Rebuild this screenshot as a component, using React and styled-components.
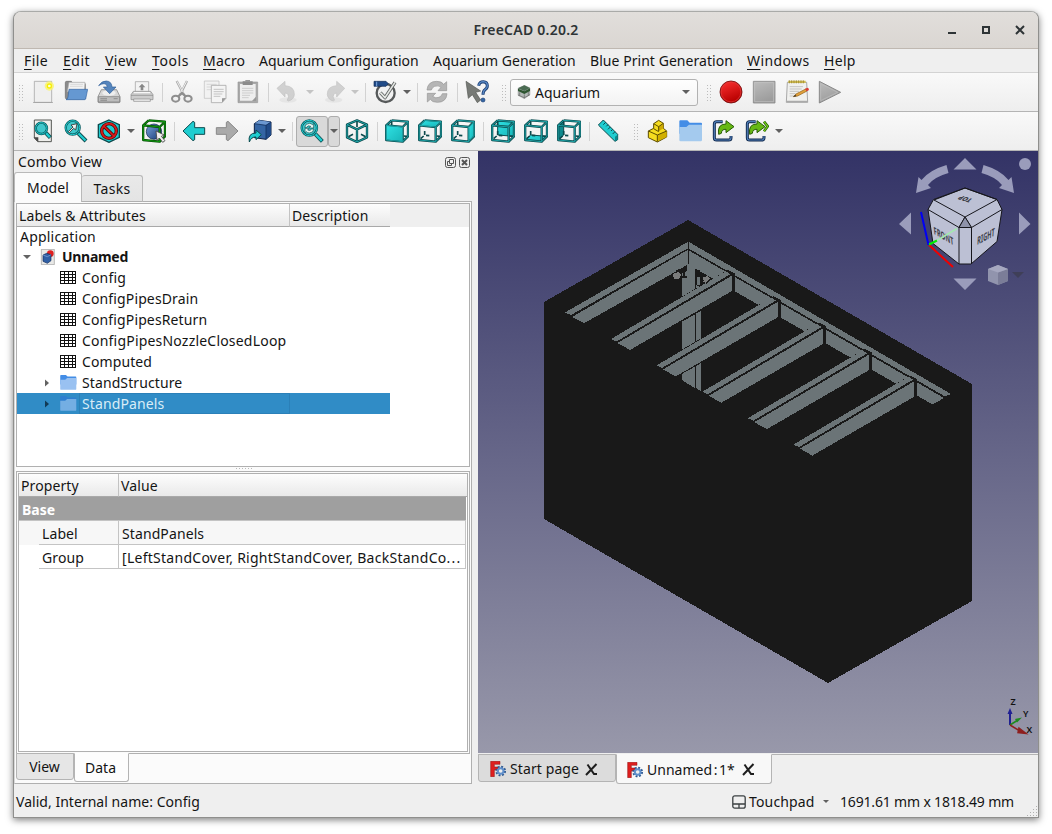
import React from "react";
import styled, { createGlobalStyle, css } from "styled-components";

const GlobalStyle = createGlobalStyle`
  * { box-sizing: border-box; }
  html, body { margin: 0; padding: 0; background: #fff; }
  body {
    font-family: "Noto Sans", "Open Sans", sans-serif;
    font-size: 14px;
    line-height: 20px;
    color: #141414;
    overflow: hidden;
  }
  svg { display: block; flex: none; }
`;

const Desktop = styled.div`
  width: 1052px;
  height: 834px;
  padding: 11px 13px 16px;
  background: #fff;
`;
const Window = styled.div`
  width: 1026px;
  height: 807px;
  border: 1px solid #8f8f8d;
  border-top-color: #a9aaa8;
  border-radius: 8px 8px 0 0;
  overflow: hidden;
  background: #efefef;
  box-shadow: 0 2px 7px rgba(0, 0, 0, 0.5);
  display: flex;
  flex-direction: column;
`;
const TitleBar = styled.header`
  height: 37px;
  flex: none;
  display: grid;
  grid-template-columns: 1fr auto 1fr;
  align-items: center;
  background: linear-gradient(#e1dedb, #dad6d2);
  border-bottom: 1px solid #bfb8b1;
  font-weight: 600;
  letter-spacing: 0.25px;
  color: #2e3436;
`;
const TitleText = styled.span`
  grid-column: 2;
`;
const WindowButtons = styled.div`
  display: flex;
  justify-content: flex-end;
  gap: 22px;
  padding-right: 12px;
`;
const MenuBar = styled.nav`
  height: 24px;
  flex: none;
  display: flex;
  align-items: center;
  padding-left: 10px;
  gap: 14.5px;
  border-bottom: 1px solid #d3d3d3;
`;
const MenuItem = styled.span`
  white-space: nowrap;
  width: ${(p) => p.$w}px;
  letter-spacing: ${(p) => p.$ls}px;
  u { text-underline-offset: 3px; text-decoration-thickness: 1px; }
`;
const Toolbar = styled.div`
  height: 39px;
  flex: none;
  display: flex;
  align-items: center;
  background: linear-gradient(#f9f9f9, #eeeeee);
  border-bottom: 1px solid #b4b4b4;
`;
const Grip = styled.div`
  width: ${(p) => p.$w || 12}px;
  height: 17px;
  flex: none;
  background: radial-gradient(circle, #bcbcbc 0.8px, transparent 1px) ${(p) => p.$x || 4}px 0 / 3px 3px repeat-y,
    radial-gradient(circle, #bcbcbc 0.8px, transparent 1px) ${(p) => (p.$x || 4) + 3}px 0 / 3px 3px repeat-y;
`;
const Tool = styled.div`
  width: 33px;
  flex: none;
  padding-left: 5px;
  opacity: ${(p) => (p.$off ? 0.55 : 1)};
`;
const Separator = styled.div`
  width: 7px;
  height: 19px;
  flex: none;
  background: linear-gradient(#d2d2d2, #d2d2d2) 4px 0 / 1px 100% no-repeat;
`;
const Caret = styled.div`
  width: ${(p) => p.$w || 12}px;
  flex: none;
  display: flex;
  justify-content: center;
  &::after {
    content: "";
    border: ${(p) => p.$size || 4}px solid transparent;
    border-top-color: ${(p) => (p.$off ? "#c4c4c4" : "#606060")};
    border-bottom: 0;
  }
`;
const PressedGroup = styled.div`
  display: flex;
  width: 44px;
  height: 31px;
  margin-left: 1px;
  flex: none;
`;
const PressedPart = styled.div`
  width: ${(p) => p.$w}px;
  display: flex;
  align-items: center;
  justify-content: center;
  background: #d9d9d9;
  border: 1px solid #adadad;
  border-radius: 3px;
`;
const Combo = styled.div`
  width: 188px;
  height: 27px;
  flex: none;
  display: flex;
  align-items: center;
  gap: 4px;
  padding: 0 5px 0 6px;
  border: 1px solid #b2b2b2;
  border-radius: 3px;
  background: linear-gradient(#fefefe, #f3f3f3);
  span { flex: 1; padding-top: 1px; }
`;
const Body = styled.main`
  height: 633px;
  flex: none;
  display: flex;
`;
const Dock = styled.section`
  width: 464px;
  flex: none;
  display: flex;
  flex-direction: column;
`;
const DockTitle = styled.div`
  height: 22px;
  padding: 0 8px 0 4px;
  display: flex;
  align-items: center;
  justify-content: space-between;
  letter-spacing: 0.25px;
`;
const DockButtons = styled.div`
  display: flex;
  gap: 3px;
`;
const TopTabs = styled.div`
  height: 29px;
  display: flex;
  align-items: flex-end;
  position: relative;
  z-index: 1;
  margin-bottom: -1px;
`;
const TopTab = styled.div`
  width: ${(p) => p.$w}px;
  height: ${(p) => (p.$on ? 30 : 27)}px;
  border: 1px solid #b9b9b9;
  border-bottom: ${(p) => (p.$on ? "0" : "1px solid #b0b0b0")};
  border-left-width: ${(p) => (p.$on ? 1 : 0)}px;
  border-radius: 3px 3px 0 0;
  background: ${(p) => (p.$on ? "#fbfbfb" : "linear-gradient(#e9e9e9,#e4e4e4)")};
  display: flex;
  align-items: center;
  justify-content: center;
  letter-spacing: ${(p) => (p.$on ? 0.1 : 0.35)}px;
`;
const Pane = styled.div`
  width: 458px;
  flex: 1;
  border: 1px solid #b0b0b0;
  border-left-color: #d8d8d8;
  background: #fbfbfb;
  padding: 1px 1px 0;
  display: flex;
  flex-direction: column;
`;
const TreeFrame = styled.div`
  height: 264px;
  border: 1px solid #b0b0b0;
  background: #fff;
`;
const HeaderRow = styled.div`
  height: ${(p) => p.$h}px;
  display: flex;
  background: #efefef;
`;
const HeaderCell = styled.div`
  width: ${(p) => p.$w}px;
  padding: 2px 0 0 2px;
  display: flex;
  align-items: center;
  letter-spacing: 0.1px;
  background: linear-gradient(#fdfdfd, #e9e9e9);
  border-bottom: 1px solid #a9a9a9;
  border-right: ${(p) => (p.$last ? 0 : 1)}px solid #c3c3c3;
`;
const TreeRow = styled.div`
  height: ${(p) => p.$h || 21}px;
  width: 373px;
  display: flex;
  align-items: center;
  padding-left: ${(p) => p.$indent}px;
  letter-spacing: ${(p) => p.$ls || 0}px;
  font-weight: ${(p) => (p.$bold ? 700 : 400)};
  ${(p) => p.$sel && css`
    background: #308cc6;
    color: #d9ecf7;
  `}
`;
const Branch = styled.div`
  width: ${(p) => p.$w || 20}px;
  flex: none;
`;
const TreeLabel = styled.span`
  padding-left: ${(p) => p.$gap || 6}px;
`;
const SelectedCell = styled.span`
  width: 211px;
  height: 21px;
  margin-left: 2px;
  padding-left: 2px;
  border: 1px solid #2b80b8;
  line-height: 20px;
`;
const Splitter = styled.div`
  height: 4px;
  margin: 0 auto;
  width: 17px;
  background: radial-gradient(circle, #b9b9b9 0.8px, transparent 1px) 0 0 / 3px 3px repeat-x;
`;
const PropertyOuter = styled.div`
  height: 283px;
  border: 1px solid #b0b0b0;
  padding: 1px;
`;
const PropertyFrame = styled.div`
  height: 279px;
  border: 1px solid #b0b0b0;
  background: #fff;
`;
const GroupRow = styled.div`
  height: 24px;
  padding-left: 3px;
  margin-right: 1px;
  background: #9f9f9f;
  border-bottom: 1px solid #c4c4c4;
  color: #fff;
  font-weight: 700;
  line-height: 25px;
`;
const PropRow = styled.div`
  height: 24px;
  margin-right: 1px;
  display: flex;
  background: ${(p) => (p.$alt ? "#f7f7f7" : "#fff")};
`;
const PropName = styled.div`
  width: 80px;
  margin-left: 20px;
  padding-left: 3px;
  line-height: 26px;
  letter-spacing: 0.1px;
  border-bottom: 1px solid #c4c4c4;
  border-right: 1px solid #c4c4c4;
`;
const PropValue = styled.div`
  flex: 1;
  padding-left: 3px;
  line-height: 26px;
  letter-spacing: ${(p) => p.$ls || 0.1}px;
  border-bottom: 1px solid #c4c4c4;
  border-right: 1px solid #c4c4c4;
  white-space: nowrap;
`;
const Ellipsis = styled.span`
  letter-spacing: 1.2px;
`;
const BottomTabs = styled.div`
  display: flex;
  align-items: flex-start;
  margin-top: -1px;
`;
const BottomTab = styled.div`
  width: ${(p) => p.$w}px;
  height: ${(p) => p.$h}px;
  padding-right: ${(p) => (p.$on ? 2 : 1)}px;
  border: 1px solid #b4b4b4;
  border-top-color: ${(p) => (p.$on ? "transparent" : "#b4b4b4")};
  border-radius: 0 0 3px 3px;
  background: ${(p) => (p.$on ? "#fdfdfd" : "#e6e6e6")};
  display: flex;
  align-items: center;
  justify-content: center;
  white-space: nowrap;
`;
const DocumentTab = styled(BottomTab)`
  justify-content: flex-start;
  padding: ${(p) => (p.$on ? 1 : 2)}px 0 0 ${(p) => p.$pad}px;
  gap: 4px;
  background: ${(p) => (p.$on ? "#f8f8f8" : "#dcdcdc")};
`;
const DocumentName = styled.span`
  width: ${(p) => p.$w}px;
  letter-spacing: ${(p) => p.$ls}px;
  i { font-style: normal; word-spacing: -2px; }
`;
const Workspace = styled.section`
  width: 560px;
  flex: none;
`;
const Viewport = styled.div`
  height: 602px;
  background: linear-gradient(#333366, #9898aa);
`;
const MdiTabs = styled.div`
  height: 31px;
  margin-top: 1px;
  display: flex;
  align-items: flex-start;
  background: linear-gradient(#b4b4b4, #b4b4b4) 0 0 / 100% 1px no-repeat;
`;
const StatusBar = styled.footer`
  flex: 1;
  display: flex;
  align-items: center;
  padding: 2px 24px 0 2px;
  position: relative;
`;
const StatusText = styled.span`
  flex: 1;
  letter-spacing: 0.03px;
`;
const InputMode = styled.span`
  width: 74px;
  padding-left: 3px;
  letter-spacing: 0.15px;
`;
const StatusSize = styled.span`
  width: 174px;
  margin-left: 8px;
  letter-spacing: -0.17px;
  white-space: nowrap;
`;
const ResizeGrip = styled.div`
  position: absolute;
  right: 1px;
  bottom: 1px;
  width: 11px;
  height: 11px;
  clip-path: polygon(100% 0, 100% 100%, 0 100%);
  background: radial-gradient(circle, #b0b0b0 0.8px, transparent 1px) 0 0 / 3px 3px;
`;

/* ---------- icons ---------- */
const Icon = ({ children, s = 24, vb = 72 }) => (
  <svg width={s} height={s} viewBox={`0 0 ${vb} ${vb}`} fill="none">{children}</svg>
);
const TEAL = "#1fcdd0";
const DK = "#0c4a4d";

const NewIcon = () => (
  <Icon>
    <path d="M10 4h52v63H10z" fill="#efefef" stroke="#a9a9a9" strokeWidth="2.5" />
    <path d="M6 67.500h60" stroke="#999" strokeWidth="2" />
    <circle cx="55" cy="18" r="14" fill="#fbf46a" opacity=".8" />
    <circle cx="55" cy="18" r="8" fill="#f6f000" /><circle cx="55" cy="18" r="4" fill="#fffde0" />
  </Icon>
);
const OpenIcon = () => (
  <Icon>
    <path d="M4 8q0-4 4-4h14l4 5h34q4 0 4 4v44H8q-4 0-4-5z" fill="#8b8b8b" stroke="#666" strokeWidth="2" />
    <path d="M15 7h48l-2 28H10z" fill="#f2f2f2" stroke="#aaa" strokeWidth="2" />
    <path d="M19 13h38M18 19h38" stroke="#ccc" strokeWidth="2" />
    <path d="M15 28h56l-6 29q-1 2-4 2H6q5-2 6-8z" fill="#6598d2" stroke="#3465a4" strokeWidth="2" />
  </Icon>
);
const SaveIcon = () => (
  <Icon>
    <path d="M13 29h46l10 21v15q0 3-3 3H6q-3 0-3-3V50z" fill="#d6d6d6" stroke="#777" strokeWidth="2" />
    <path d="M4 50h64v16H4z" fill="#bdbdbd" stroke="#777" strokeWidth="2" />
    <ellipse cx="36" cy="39" rx="20" ry="8" fill="#eee" />
    <path d="M10 56h20M10 61h20M50 56h12" stroke="#777" strokeWidth="2" />
    <path d="M5 17Q14 2 28 3q16 1 17 18h12L38 41 19 21h12q-2-11-10-10-8 0-16 6z" fill="#5585bd" stroke="#2f5d98" strokeWidth="2" />
  </Icon>
);
const PrintIcon = () => (
  <Icon>
    <path d="M16 5h40v32H16z" fill="#f3f3f3" stroke="#999" strokeWidth="2" />
    <path d="M36 11l10 11h-6v9h-8v-9h-6z" fill="#888" />
    <path d="M10 34h52l7 10v15H3V44z" fill="#ccc" stroke="#888" strokeWidth="2" />
    <path d="M3 46h66M11 57h50v7H11z" stroke="#888" strokeWidth="2" fill="#eee" />
    <path d="M12 38h48" stroke="#fff" strokeWidth="3" />
  </Icon>
);
const CutIcon = () => (
  <Icon>
    <path d="M20 3l22 42M51 3L30 45" stroke="#a9a9a9" strokeWidth="7" />
    <path d="M21 4l20 38M50 4L31 40" stroke="#eee" strokeWidth="3" />
    <ellipse cx="17" cy="56" rx="11" ry="9" stroke="#8e8e8e" strokeWidth="6" />
    <ellipse cx="54" cy="56" rx="11" ry="9" stroke="#8e8e8e" strokeWidth="6" />
    <path d="M25 49l11-10 11 10" stroke="#8e8e8e" strokeWidth="7" />
  </Icon>
);
const CopyIcon = () => (
  <Icon>
    <path d="M4 3h44v52H4z" fill="#f2f2f2" stroke="#bdbdbd" strokeWidth="2" />
    <path d="M11 13h30M11 21h30M11 29h14" stroke="#ccc" strokeWidth="2" />
    <path d="M25 16h44v39L57 68H25z" fill="#f4f4f4" stroke="#aaa" strokeWidth="2.5" />
    <path d="M32 28h30M32 35h30M32 42h26M32 49h20" stroke="#bbb" strokeWidth="2.5" />
    <path d="M69 54L57 68V55z" fill="#999" />
  </Icon>
);
const PasteIcon = () => (
  <Icon>
    <path d="M6 6h59v62H6z" fill="#a9a9a9" stroke="#999" strokeWidth="2" />
    <path d="M12 12h47v50H12z" fill="#eee" />
    <path d="M20 4h30v11H20z" fill="#8c8c8c" /><path d="M28 0h14v6H28z" fill="#999" />
    <path d="M18 25h34M18 32h34M18 39h34M18 46h24M18 53h20" stroke="#c6c6c6" strokeWidth="2.5" />
    <path d="M60 50L48 63h12z" fill="#999" />
  </Icon>
);
const UndoIcon = ({ flip }) => (
  <Icon>
    <g transform={flip ? "matrix(-1 0 0 1 74 0)" : undefined}>
      <ellipse cx="36" cy="60" rx="26" ry="8" fill="#ddd" />
      <path d="M3 25L27 4v13q29 2 28 27-2 15-18 19-6-2-2-6 5-6 1-13-3-5-9-5v12z" fill="#b4b4b4" stroke="#9a9a9a" strokeWidth="2" />
    </g>
  </Icon>
);
const RefreshIcon = () => (
  <Icon>
    <path d="M6 30Q8 4 35 4q16 0 21 9l9-8v27H39l9-10q-8-7-19-3-8 3-10 11z" fill="#b5b5b5" stroke="#959595" strokeWidth="2" />
    <path d="M66 41Q64 67 37 67q-16 0-21-9l-9 8V40h25l-9 9q8 7 19 3 8-3 10-11z" fill="#b5b5b5" stroke="#959595" strokeWidth="2" />
  </Icon>
);
const CheckIcon = () => (
  <Icon>
    <circle cx="38" cy="39" r="27" fill="#f1f1f1" stroke="#56595a" strokeWidth="7" />
    <path d="M3 4h36l7 7-7 8H3z" fill="#204a87" stroke="#102a55" strokeWidth="2" /><path d="M11 5v14" stroke="#7aa5dc" strokeWidth="3" />
    <path d="M22 38l14 15L66 7" stroke="#5e6262" strokeWidth="10" strokeLinejoin="round" />
    <path d="M22 38l14 15L66 7" stroke="#e4e6e2" strokeWidth="5" />
  </Icon>
);
const WhatIcon = () => (
  <Icon>
    <path d="M3 4l44 29-15 4 15 23-10 8-15-24-12 11z" fill="#777a76" stroke="#555753" strokeWidth="2" />
    <path d="M41 17q2-12 14-12 12 1 12 12 0 8-7 12-6 4-6 15" stroke="#1c3f75" strokeWidth="9" />
    <path d="M41 17q2-12 14-12 12 1 12 12 0 8-7 12-6 4-6 14" stroke="#5b8ac6" strokeWidth="4" />
    <circle cx="54" cy="60" r="6" fill="#3465a4" stroke="#1c3f75" strokeWidth="2" />
  </Icon>
);
const AquariumIcon = () => (
  <Icon s={14} vb={42}>
    <path d="M3 10L22 1l17 8v20L22 41 3 31z" fill="#b4bab8" stroke="#777" />
    <path d="M3 10L22 1l17 8-17 9z" fill="#4a6b52" /><path d="M3 11l19 8 17-9v8l-17 9-19-9z" fill="#2e5531" />
    <path d="M3 30l19 8 17-9M22 28v12M8 22v10M34 21v11" stroke="#666" strokeWidth="2" />
  </Icon>
);
const RecordIcon = () => (
  <Icon>
    <defs><linearGradient id="rec" x2=".4" y2="1"><stop stopColor="#ff3434" /><stop offset="1" stopColor="#b80000" /></linearGradient></defs>
    <circle cx="36" cy="36" r="33" fill="url(#rec)" stroke="#6e0b0b" strokeWidth="2.5" />
    <circle cx="36" cy="36" r="29.5" stroke="#e03c3c" strokeWidth="2" />
  </Icon>
);
const StopIcon = () => (
  <Icon>
    <defs><linearGradient id="gr" x2=".4" y2="1"><stop stopColor="#bdbdbd" /><stop offset="1" stopColor="#9c9c9c" /></linearGradient></defs>
    <path d="M4 4h65v65H4z" fill="url(#gr)" stroke="#8a8a8a" strokeWidth="2.5" />
    <path d="M8 8h57v57H8z" stroke="#c4c4c4" strokeWidth="2" />
  </Icon>
);
const NoteIcon = () => (
  <Icon>
    <path d="M7 7h58l3 60H4z" fill="#f0f0ee" stroke="#999" strokeWidth="2.5" />
    <path d="M4 62h64v5H4z" fill="#aaa" />
    <path d="M10 2h52v7H10z" fill="#d2bd50" /><path d="M13 1v9M20 1v9M27 1v9M34 1v9M41 1v9M48 1v9M55 1v9" stroke="#978532" strokeWidth="2.5" />
    <path d="M14 20h40M14 27h36M14 34h28M14 41h18M14 48h14" stroke="#bbb" strokeWidth="2.5" />
    <path d="M25 50l8-8 29-15 4 6-28 15z" fill="#e2a13c" stroke="#8d5b10" strokeWidth="2" />
    <path d="M60 26l8-3q5 2 3 8l-6 3z" fill="#dc3a34" /><path d="M25 50l6-6 3 5z" fill="#333" />
  </Icon>
);
const PlayIcon = () => (
  <Icon><path d="M4 4l64 33L4 69z" fill="url(#gr)" stroke="#8a8a8a" strokeWidth="3" /><path d="M8 11l51 26L8 62z" stroke="#c0c0c0" strokeWidth="2" /></Icon>
);
const Magnifier = ({ cx, cy, r, hx, hy }) => (
  <>
    <path d={`M${cx + r * 0.8} ${cy + r * 0.8}L${hx} ${hy}`} stroke={DK} strokeWidth="12" />
    <path d={`M${cx + r * 0.8} ${cy + r * 0.8}L${hx - 1.5} ${hy - 1.5}`} stroke={TEAL} strokeWidth="7" />
    <circle cx={cx} cy={cy} r={r} fill="#40c8cc" stroke="#0c5a5e" strokeWidth="7" />
    <circle cx={cx} cy={cy} r={r} stroke={TEAL} strokeWidth="3" />
  </>
);
const FitAllIcon = () => (
  <Icon>
    <path d="M10 3h51v65H20L10 57z" fill="#efefec" stroke="#555753" strokeWidth="3" /><path d="M8 55l14 14V55z" fill="#444" />
    <Magnifier cx={31} cy={28} r={17} hx={58} hy={56} />
  </Icon>
);
const FitSelIcon = () => (
  <Icon>
    <Magnifier cx={26} cy={26} r={21} hx={66} hy={66} />
    <path d="M13 38l14-14-6-6 18-4-4 19-6-5-13 13z" fill="#eee" stroke="#333" strokeWidth="2.5" />
  </Icon>
);
const NoDrawIcon = () => (
  <Icon>
    <path d="M36 3l31 14v38L36 70 4 55V17z" fill={TEAL} stroke={DK} strokeWidth="4" />
    <circle cx="36" cy="36" r="22" stroke="#5c0000" strokeWidth="10" /><path d="M20 21l32 31" stroke="#5c0000" strokeWidth="10" />
    <circle cx="36" cy="36" r="22" stroke="#d81c1c" strokeWidth="5.5" /><path d="M20 21l32 31" stroke="#d81c1c" strokeWidth="5" />
  </Icon>
);
const BOX = "M3.500 19L53 24V68L3.500 63zM20 4L69 8V52L53 68M3.500 19L20 4M53 24L69 8";
const BoxFrame = ({ c = "#22b4b8", d = DK }) => (
  <><path d={BOX} stroke={d} strokeWidth="7" strokeLinejoin="round" /><path d={BOX} stroke={c} strokeWidth="2.5" strokeLinejoin="round" /></>
);
const HIDDEN = "M20 8v12M20 36v12M24 49l10 1M56 51l10 1M8 59l9-8";
const CubeIcon = ({ face, rear, deep }) => (
  <Icon>
    <defs><linearGradient id="tg" x2="1" y2="1"><stop stopColor="#2ee0e2" /><stop offset="1" stopColor="#18b6ba" /></linearGradient></defs>
    {rear && <path d={face} fill={deep ? "#0e8a8e" : "url(#tg)"} stroke={DK} strokeWidth="3" />}
    <path d={HIDDEN} stroke={DK} strokeWidth="5" />
    <BoxFrame />
    {!rear && <path d={face} fill="url(#tg)" />}
  </Icon>
);
const IsoIcon = () => {
  const p = "M36 4L66 17V55L36 69 6 55V17zM6 17L36 31 66 17M36 31V69";
  return (
    <Icon>
      <path d="M36 6V24M10 53L24 46M62 53L48 46" stroke={DK} strokeWidth="5" />
      <path d={p} stroke={DK} strokeWidth="7" strokeLinejoin="round" /><path d={p} stroke="#22b4b8" strokeWidth="2.5" />
    </Icon>
  );
};
const BoundIcon = () => (
  <Icon>
    <defs><linearGradient id="bl" x2="1" y2="1"><stop stopColor="#7ba4dc" /><stop offset="1" stopColor="#163a75" /></linearGradient></defs>
    <circle cx="36" cy="38" r="23" fill="url(#bl)" stroke="#0b2145" strokeWidth="2" />
    <BoxFrame c="#12a812" d="#064d06" />
    <path d="M42 36l25 12-9 4 11 13-7 5-10-13-7 7z" fill="#eee" stroke="#444" strokeWidth="2.5" />
  </Icon>
);
const ArrowIcon = ({ right }) => (
  <Icon>
    <path transform={right ? "matrix(-1 0 0 1 72 0)" : undefined} d="M3 36L33 7l5 3v16h30v20H38v16l-5 3z"
      fill={right ? "#aaaaaa" : TEAL} stroke={right ? "#888" : DK} strokeWidth="3" strokeLinejoin="round" />
  </Icon>
);
const LinkBoxIcon = () => (
  <Icon>
    <path d="M19 14L34 4l35 5v39L54 61 19 56z" fill="#3465a4" stroke="#0b1f42" strokeWidth="3" />
    <path d="M19 14l35 5 15-10L34 4z" fill="#6b97d0" /><path d="M54 19v42l15-13V9z" fill="#204a87" /><path d="M19 14l35 5v42M54 19L69 9" stroke="#12305f" strokeWidth="2.5" />
    <path d="M4 69Q-1 42 24 42V33l16 14-16 15V54Q10 53 4 69z" fill={TEAL} stroke={DK} strokeWidth="3" />
  </Icon>
);
const SyncIcon = () => (
  <Icon>
    <Magnifier cx={28} cy={27} r={23} hx={67} hy={67} />
    <path d="M14 25q2-12 14-12 6 0 9 4l4-3v13H28l4-5q-8-4-12 3zM42 30q-2 12-14 12-6 0-9-4l-4 3V28h12l-4 5q8 4 12-3z" fill="#e5f6f4" stroke={DK} strokeWidth="2" />
  </Icon>
);
const RulerIcon = () => (
  <Icon>
    <path d="M4 18L19 3l43 43v16l-8 5L5 19z" fill={TEAL} stroke={DK} strokeWidth="3" strokeLinejoin="round" />
    <path d="M54 53l8-6v15l-8 5z" fill="#0c8a8e" />
    <path d="M26 10l-7 7M33 17l-5 5M40 24l-7 7M47 31l-5 5M54 38l-7 7" stroke={DK} strokeWidth="3" />
  </Icon>
);
const PartIcon = () => (
  <Icon>
    <path d="M7 36l16-8V14L38 4l14 9v15l10 8v18L34 69 7 56z" fill="#f5dc1f" stroke="#5c4b00" strokeWidth="3" strokeLinejoin="round" />
    <path d="M34 49l28-13v18L34 67z" fill="#d1b000" /><path d="M38 24l14-9v13l-14 9z" fill="#cda900" />
    <path d="M7 36l27 12 28-12M34 48v20M23 14l15 9 14-10M38 23v14M38 38l-15-9" stroke="#5c4b00" strokeWidth="3" />
  </Icon>
);
const FolderIcon = ({ s = 24, sel, tree }) => (
  <Icon s={s}>
    <path d="M1 7q0-3 3-3h21l7 7h34q3 0 3 3v30H1z" fill={sel ? "#2f7fd0" : "#438de6"} />
    <path d="M1 24h21l8-7h39v46q0 4-4 4H5q-4 0-4-4z" fill={sel ? "#74aee3" : tree ? "#99c1f1" : "#a4caee"} />
  </Icon>
);
const LinkIcon = ({ multi }) => (
  <Icon>
    <path d="M32 8H14Q7 8 7 15V56q0 7 7 7H50q7 0 7-7V51" stroke="#10294d" strokeWidth="9" />
    <path d="M32 8H14Q7 8 7 15V56q0 7 7 7H50q7 0 7-7V51" stroke="#4f7db8" strokeWidth="3.5" />
    {multi && <path d="M57 8l11 14-11 15" stroke="#285c06" strokeWidth="8" />}
    {multi && <path d="M57 8l11 14-11 15" stroke="#73d216" strokeWidth="3.5" />}
    <path transform={multi ? "translate(-6 0)" : undefined} d="M20 46Q15 15 42 15V5l24 18-24 18V31Q29 30 28 43z" fill="#66b814" stroke="#285c06" strokeWidth="3" />
  </Icon>
);
const SHEET_COLUMNS = [[1, 3], [5, 3], [9, 3], [13, 2]];
const SheetIcon = () => (
  <svg width="16" height="13" viewBox="0 0 16 13" shapeRendering="crispEdges">
    <path d="M0 0h16v13H0z" fill="#111" />
    {[1, 4, 7, 10].map((y) => SHEET_COLUMNS.map(([x, w]) => <rect key={`${x}-${y}`} x={x} y={y} width={w} height="2" fill="#fff" />))}
  </svg>
);
const DocIcon = () => (
  <Icon s={16} vb={48}>
    <path d="M4 1h39v46H4z" fill="#e9e9e7" stroke="#999" strokeWidth="2" />
    <circle cx="31" cy="14" r="10" fill="#e02020" />
    <path d="M9 18l11-5 13 4v18L22 43 9 37z" fill="#2f5fa5" stroke="#122c5a" strokeWidth="2" /><path d="M9 18l13 5 11-6" stroke="#88aadd" strokeWidth="2" />
  </Icon>
);
const FcIcon = () => (
  <Icon s={16} vb={48}>
    <path d="M2 1h28v9H13v8h11v9H13v20H2z" fill="#df1f1f" stroke="#8c0c0c" strokeWidth="1.5" />
    <circle cx="32" cy="30" r="13" stroke="#2c568f" strokeWidth="6" strokeDasharray="5.6 4.6" />
    <circle cx="32" cy="30" r="8.5" stroke="#5f8fcb" strokeWidth="6" fill="#eee" />
  </Icon>
);
const CloseX = () => (
  <svg width="13" height="13" viewBox="0 0 13 13"><path d="M1 12L11.500 1M2.500 1.500l6.500 9.500h3" stroke="#1e1e1e" strokeWidth="2" fill="none" /></svg>
);
const DockFloat = () => (
  <svg width="11" height="11" viewBox="0 0 11 11" fill="none" stroke="#555"><rect x=".5" y=".5" width="10" height="10" rx="2" /><path d="M4.500 2.500h4v4h-4zM4.500 4.500h-2v4h4v-2" /></svg>
);
const DockClose = () => (
  <svg width="11" height="11" viewBox="0 0 11 11" fill="none" stroke="#555"><rect x=".5" y=".5" width="10" height="10" rx="2" /><path d="M3 3l5 5M8 3l-5 5" strokeWidth="2" /></svg>
);
const TouchpadIcon = () => (
  <svg width="14" height="14" viewBox="0 0 14 14" fill="none" stroke="#3b4042" strokeWidth="1.3"><rect x=".8" y=".8" width="12.4" height="12.4" rx="2" /><path d="M1 9h12M7 9v4" /></svg>
);
const TreeArrow = ({ open, sel }) => (
  <svg width="8" height="8" viewBox="0 0 8 8"><path d={open ? "M0 2h8L4 6z" : "M2 0.500l4 3.500-4 3.500z"} fill={sel ? "#123a55" : "#636363"} /></svg>
);

/* ---------- 3D scene ---------- */
const Beam = ({ i }) => (
  <g transform={`translate(${i * 45.6} ${i * 26.4})`}>
    <path d="M611 339L728 271 734 274V291L630 350z" fill="#191919" stroke="#191919" strokeWidth="2" />
    <path d="M611 339L726.500 270.800 731.500 273.500 616.500 341.500z" fill="#6b7477" />
    <path d="M617.500 343L732 275.500V291L630 350z" fill="#6b7477" />
  </g>
);
const Scene = () => (
  <svg width="560" height="602" viewBox="478 151 560 602">
    <g shapeRendering="crispEdges">
      <path d="M688 220L972 384V601L828 683 544 519V302z" fill="#191919" />
      <path d="M682 264h12.500v124L682 380zM696 275h5v116l-5-3z" fill="#6b7477" />
      <path d="M695 266l28 14-14 8-14-3z" fill="#191919" />
      <path d="M565 312.500L687.500 242V248.500L571 315zM572 317L687.500 250V265L584.500 323z" fill="#6b7477" />
      <path d="M689 242L951 394 945 396.500 689 249zM689 250.500L944 398 932.500 404.500 689 265z" fill="#6b7477" />
      {[0, 1, 2, 3, 4].map((i) => <Beam key={i} i={i} />)}
      <path d="M689 249.500L945 397.200" stroke="#191919" strokeWidth="1.3" />
      <path d="M682 268l5-3v6l-5 2z" fill="#191919" />
      <path d="M673 274l5-2 3 3-2 4-5 0zM702 278l5-2 3 3-3 4-4-1z" fill="#7b7c7c" />
      <path d="M676 271l6-2M684 267v10M682 277h5M698 270v13M696 271h4M701 275l2 6M706 283l5-4" stroke="#191919" strokeWidth="1.5" />
      <path d="M697 277h3v8h-3z" fill="#6b7477" />
    </g>
    <g fill="#9a9cbb">
      <path d="M953.500 169.500h23L965 158zM953.500 278.500h23L965 290zM911 212.500v22L899 224zM1019 212.500v22l11.500-10.500z" />
      <circle cx="1025" cy="164" r="6" />
      <path d="M946.500 165q-17 5-25 15l-3-3-2.500 16 15-5-3-3q6-8 20.500-12zM983.500 165q17 5 25 15l3-3 2.500 16-15-5 3-3q-6-8-20.500-12z" />
    </g>
    <g stroke="#16161c" strokeWidth="1" strokeLinejoin="round">
      <path d="M965 188l32 11.500 5 10-5 32-26 22.500h-12l-26-20.500-5-34 5.500-10z" fill="#bcc0d4" />
      <path d="M934 200l31-12 32 11.500-32 17.500zM928 209.500l31 18 6-10.500M1002 209.500l-30.500 18-6.500-10.500M959 227.500h12.500V264M959 227.500V264" fill="none" />
      <path d="M965 217l-6 10.500h12.500z" fill="#8f93aa" />
    </g>
    <g fill="#3d3f49" fontFamily="Noto Sans" fontWeight="700">
      <text transform="matrix(.86 .5 .1 1 934 234)" fontSize="10.5" textLength="23" lengthAdjust="spacingAndGlyphs">FRONT</text>
      <text transform="matrix(.86 -.46 -.05 1 977 245)" fontSize="11" textLength="20.5" lengthAdjust="spacingAndGlyphs">RIGHT</text>
      <text transform="matrix(-.9 -.28 .6 -.5 973 199)" fontSize="10" fontWeight="900" textLength="13" lengthAdjust="spacingAndGlyphs">TOP</text>
    </g>
    <path d="M921 212l7.500 33" stroke="#0000f5" strokeWidth="2" />
    <path d="M929 245l24 22" stroke="#f00000" strokeWidth="2" />
    <path d="M929 244.500l8-4" stroke="#00f000" strokeWidth="2" /><path d="M937 240.500l20-12" stroke="#a3e8b0" strokeWidth="1.5" />
    <path d="M988 269l10-4 10 4v12l-10 4-10-4z" fill="#9194ad" /><path d="M998 272.500l10-3.500v12l-10 4z" fill="#7b7d98" /><path d="M988 269l10-4 10 4-10 3.500z" fill="#a6a8c0" />
    <path d="M1012 272h12l-6 6z" fill="#3f3f58" />
    <g strokeWidth="1.5" fill="none">
      <path d="M1010 725V711" stroke="#1f1f93" strokeWidth="2" /><path d="M1007.500 714l2.500-6 2.500 6z" fill="#1f1f93" />
      <path d="M1010 725l8-5" stroke="#1f8a1f" /><path d="M1015 719l7-1.500-5 5z" fill="#1f8a1f" />
      <path d="M1010 725l10 6" stroke="#8e1f1f" /><path d="M1019 728l7 5.500-8-1z" fill="#8e1f1f" stroke="#8e1f1f" />
    </g>
    <g fill="#111" fontFamily="Noto Sans" fontWeight="600" fontSize="9"><text x="1010.5" y="705">Z</text><text x="1023" y="717">Y</text><text x="1026.5" y="733">X</text></g>
  </svg>
);

const FACES = {
  front: "M5 21L51.500 25.500V66L5 61.500z",
  top: "M8 19L21 6 65 10 52 22z",
  right: "M55 25L67 12V51L55 63z",
  rear: "M20 5L69 9V52L20 48z",
  bottom: "M4 63L20 48 69 52 53 68z",
  left: "M4 19L20 4V48L4 63z",
};

const MENUS = [
  ["F", "ile", 24.5, 0.4], ["E", "dit", 27.5, 0.5], ["V", "iew", 32.5, 0.4], ["T", "ools", 36.5, 0.6], ["M", "acro", 41.5, 0.2],
  ["", "Aquarium Configuration", 159.5, 0], ["", "Aquarium Generation", 142.5, 0], ["", "Blue Print Generation", 142.5, 0.05],
  ["W", "indows", 62.5, 0.4], ["H", "elp", 32, 0.3],
];
const SHEETS = [["Config", 0.15], ["ConfigPipesDrain", 0.13], ["ConfigPipesReturn", 0.13], ["ConfigPipesNozzleClosedLoop", 0.2], ["Computed", 0.1]];

export default function App() {
  return (
    <Desktop>
      <GlobalStyle />
      <Window>
        <TitleBar>
          <TitleText>FreeCAD 0.20.2</TitleText>
          <WindowButtons>
            <svg width="12" height="12" viewBox="0 0 12 12"><path d="M2 9h8" stroke="#2e3436" strokeWidth="2" /></svg>
            <svg width="12" height="12" viewBox="0 0 12 12"><path d="M3 3h6v6H3z" fill="none" stroke="#2e3436" strokeWidth="2" /></svg>
            <svg width="12" height="12" viewBox="0 0 12 12"><path d="M2 2l8 8M10 2l-8 8" stroke="#2e3436" strokeWidth="2" /></svg>
          </WindowButtons>
        </TitleBar>
        <MenuBar>
          {MENUS.map(([k, rest, w, ls]) => <MenuItem key={rest} $w={w} $ls={ls}>{k && <u>{k}</u>}{rest}</MenuItem>)}
        </MenuBar>
        <Toolbar>
          <Grip />
          <Tool><NewIcon /></Tool><Tool><OpenIcon /></Tool><Tool><SaveIcon /></Tool><Tool><PrintIcon /></Tool>
          <Separator />
          <Tool><CutIcon /></Tool><Tool><CopyIcon /></Tool><Tool><PasteIcon /></Tool>
          <Separator />
          <Tool $off><UndoIcon /></Tool><Caret $off /><Tool $off><UndoIcon flip /></Tool><Caret $off />
          <Separator />
          <Tool><CheckIcon /></Tool><Caret />
          <Separator />
          <Tool><RefreshIcon /></Tool>
          <Separator />
          <Tool><WhatIcon /></Tool>
          <Grip $w={17} $x={8} />
          <Combo><AquariumIcon /><span>Aquarium</span><Caret /></Combo>
          <Grip $w={16} $x={8} />
          <Tool><RecordIcon /></Tool><Tool><StopIcon /></Tool><Tool><NoteIcon /></Tool><Tool><PlayIcon /></Tool>
        </Toolbar>
        <Toolbar>
          <Grip />
          <Tool><FitAllIcon /></Tool><Tool><FitSelIcon /></Tool><Tool><NoDrawIcon /></Tool><Caret /><Tool><BoundIcon /></Tool>
          <Separator />
          <Tool><ArrowIcon /></Tool><Tool><ArrowIcon right /></Tool><Tool><LinkBoxIcon /></Tool><Caret />
          <Separator />
          <PressedGroup>
            <PressedPart $w={32}><SyncIcon /></PressedPart>
            <PressedPart $w={12}><Caret $w={10} /></PressedPart>
          </PressedGroup>
          <Tool><IsoIcon /></Tool>
          <Separator />
          <Tool><CubeIcon face={FACES.front} /></Tool><Tool><CubeIcon face={FACES.top} /></Tool><Tool><CubeIcon face={FACES.right} /></Tool>
          <Separator />
          <Tool><CubeIcon face={FACES.rear} rear /></Tool><Tool><CubeIcon face={FACES.bottom} rear /></Tool><Tool><CubeIcon face={FACES.left} rear deep /></Tool>
          <Separator />
          <Tool><RulerIcon /></Tool>
          <Grip $w={16} $x={8} />
          <Tool><PartIcon /></Tool><Tool><FolderIcon /></Tool><Tool><LinkIcon /></Tool><Tool><LinkIcon multi /></Tool><Caret />
        </Toolbar>
        <Body>
          <Dock>
            <DockTitle>Combo View<DockButtons><DockFloat /><DockClose /></DockButtons></DockTitle>
            <TopTabs><TopTab $w={68} $on>Model</TopTab><TopTab $w={61}>Tasks</TopTab></TopTabs>
            <Pane>
              <TreeFrame>
                <HeaderRow $h={23}><HeaderCell $w={273}>Labels &amp; Attributes</HeaderCell><HeaderCell $w={100} $last>Description</HeaderCell></HeaderRow>
                <TreeRow $h={19} $indent={3} $ls={0.2}>Application</TreeRow>
                <TreeRow $indent={6} $bold $ls={-0.3}><Branch $w={17}><TreeArrow open /></Branch><DocIcon /><TreeLabel>Unnamed</TreeLabel></TreeRow>
                {SHEETS.map(([s, ls]) => <TreeRow key={s} $indent={43} $ls={ls}><SheetIcon /><TreeLabel>{s}</TreeLabel></TreeRow>)}
                <TreeRow $indent={26} $ls={0.1}><Branch $w={17}><TreeArrow /></Branch><FolderIcon s={17} tree /><TreeLabel $gap={5}>StandStructure</TreeLabel></TreeRow>
                <TreeRow $indent={26} $ls={0.12} $sel><Branch $w={17}><TreeArrow sel /></Branch><FolderIcon s={17} sel /><SelectedCell>StandPanels</SelectedCell></TreeRow>
              </TreeFrame>
              <Splitter />
              <PropertyOuter>
                <PropertyFrame>
                  <HeaderRow $h={23}><HeaderCell $w={100}>Property</HeaderCell><HeaderCell $w={348} $last>Value</HeaderCell></HeaderRow>
                  <GroupRow>Base</GroupRow>
                  <PropRow $alt><PropName>Label</PropName><PropValue>StandPanels</PropValue></PropRow>
                  <PropRow><PropName>Group</PropName><PropValue $ls={0.27}>[LeftStandCover, RightStandCover, BackStandCo<Ellipsis>...</Ellipsis></PropValue></PropRow>
                </PropertyFrame>
              </PropertyOuter>
              <BottomTabs><BottomTab $w={58} $h={27}>View</BottomTab><BottomTab $w={55} $h={29} $on>Data</BottomTab></BottomTabs>
            </Pane>
          </Dock>
          <Workspace>
            <Viewport><Scene /></Viewport>
            <MdiTabs>
              <DocumentTab $w={138} $h={28} $pad={11}><FcIcon /><DocumentName $w={71} $ls={0.1}>Start page</DocumentName><CloseX /></DocumentTab>
              <DocumentTab $w={156} $h={30} $pad={10} $on><FcIcon /><DocumentName $w={91} $ls={0}>Unnamed<i> : </i>1*</DocumentName><CloseX /></DocumentTab>
            </MdiTabs>
          </Workspace>
        </Body>
        <StatusBar>
          <StatusText>Valid, Internal name: Config</StatusText>
          <TouchpadIcon /><InputMode>Touchpad</InputMode><Caret $size={3} />
          <StatusSize>1691.61 mm x 1818.49 mm</StatusSize>
          <ResizeGrip />
        </StatusBar>
      </Window>
    </Desktop>
  );
}
